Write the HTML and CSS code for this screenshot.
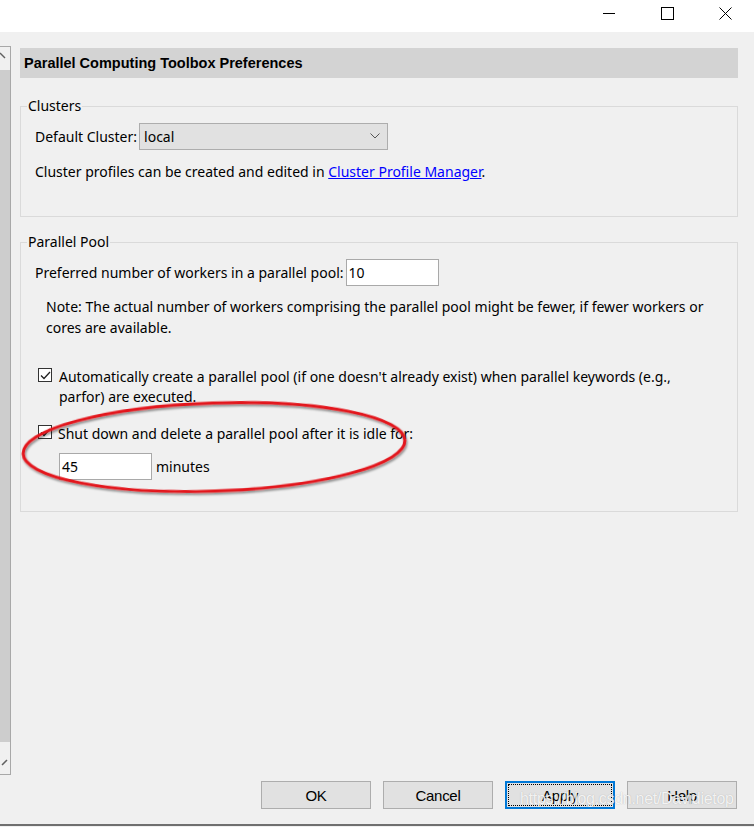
FILE: index.html
```html
<!DOCTYPE html>
<html>
<head>
<meta charset="utf-8">
<link rel="stylesheet" href="styles.css">
</head>
<body>
<div class="window">
  <div class="titlebar">
    <div class="cap-btn"><svg width="12" height="12" viewBox="0 0 12 12"><path d="M0 6.5H12" stroke="#000" stroke-width="1"/></svg></div>
    <div class="cap-btn"><svg width="13" height="13" viewBox="0 0 13 13"><rect x="0.5" y="0.5" width="12" height="12" fill="none" stroke="#000" stroke-width="1"/></svg></div>
    <div class="cap-btn"><svg width="13" height="13" viewBox="0 0 13 13"><path d="M0.5 0.5L12.5 12.5M12.5 0.5L0.5 12.5" stroke="#000" stroke-width="1"/></svg></div>
  </div>
  <div class="main">
    <div class="sidepanel">
      <div class="sp-top"><svg width="10" height="23" viewBox="0 0 10 23"><path d="M0 6L5 11" stroke="#606060" stroke-width="1.5"/></svg></div>
      <div class="sp-thumb"></div>
      <div class="sp-bottom"><svg width="10" height="32" viewBox="0 0 10 32"><path d="M2 23L7 18" stroke="#606060" stroke-width="1.5"/></svg></div>
    </div>
    <div class="content">
      <div class="header">Parallel Computing Toolbox Preferences</div>

      <fieldset class="group group-clusters">
        <legend>Clusters</legend>
        <div class="group-body">
          <div class="row">
            <span class="label">Default Cluster:</span>
            <div class="select"><span>local</span><svg width="10" height="6" viewBox="0 0 10 6"><path d="M0.5 0.5L5 5L9.5 0.5" fill="none" stroke="#555" stroke-width="1"/></svg></div>
          </div>
          <p class="text-line">Cluster profiles can be created and edited in <a class="link">Cluster Profile Manager</a>.</p>
        </div>
      </fieldset>

      <fieldset class="group group-pool">
        <legend>Parallel Pool</legend>
        <div class="group-body">
          <div class="row">
            <span class="label">Preferred number of workers in a parallel pool:</span>
            <div class="input input-workers">10</div>
          </div>
          <p class="note">Note: The actual number of workers comprising the parallel pool might be fewer, if fewer workers or cores are available.</p>
          <div class="check check-auto">
            <span class="box"><svg width="11" height="9" viewBox="0 0 11 9"><path d="M1 4.5L4 7.5L10 1" fill="none" stroke="#222" stroke-width="1.3"/></svg></span>
            <span class="check-text">Automatically create a parallel pool (if one doesn't already exist) when parallel keywords (e.g., parfor) are executed.</span>
          </div>
          <div class="check check-shut">
            <span class="box"><svg width="11" height="9" viewBox="0 0 11 9"><path d="M1 4.5L4 7.5L10 1" fill="none" stroke="#222" stroke-width="1.3"/></svg></span>
            <span class="check-text">Shut down and delete a parallel pool after it is idle for:</span>
          </div>
          <div class="row row-minutes">
            <div class="input input-minutes">45</div>
            <span class="label">minutes</span>
          </div>
        </div>
      </fieldset>

      <div class="buttons">
        <button class="btn">OK</button>
        <button class="btn">Cancel</button>
        <button class="btn btn-focus">Apply</button>
        <button class="btn">Help</button>
      </div>
    </div>
  </div>
  <div class="bottomline"></div>

  <svg class="annotation" width="754" height="827" viewBox="0 0 754 827">
    <defs>
      <filter id="sh" x="-10%" y="-20%" width="120%" height="140%">
        <feDropShadow dx="1" dy="2" stdDeviation="1.2" flood-color="#000" flood-opacity="0.45"/>
      </filter>
    </defs>
    <ellipse cx="214" cy="447" rx="191" ry="44" transform="rotate(-2 214 447)" fill="none" stroke="#e3141b" stroke-width="3" filter="url(#sh)"/>
  </svg>
  <div class="watermark">https://blog.csdn.net/Davidietop</div>
</div>
</body>
</html>
```
FILE: styles.css
```css
* { box-sizing: border-box; }
html, body { margin: 0; padding: 0; }
body {
  width: 754px;
  height: 827px;
  overflow: hidden;
  background: #f0f0f0;
  font-family: "Noto Sans", "Open Sans", sans-serif;
  font-size: 14px;
  color: #000;
}
.window {
  position: relative;
  width: 754px;
  height: 827px;
  display: flex;
  flex-direction: column;
}
.titlebar {
  height: 32px;
  background: #fff;
  display: flex;
  justify-content: flex-end;
  flex: none;
}
.cap-btn {
  width: 58px;
  display: flex;
  align-items: flex-start;
  justify-content: center;
  padding-top: 7px;
}
.main {
  height: 792px;
  display: flex;
  flex: none;
}
.sidepanel {
  width: 11px;
  margin-top: 14px;
  height: 729px;
  border: 1px solid #a8a8a8;
  border-left: 0;
  display: flex;
  flex-direction: column;
  background: #f0f0f0;
}
.sp-top { height: 23px; }
.sp-thumb { flex: 1; background: #cdcdcd; }
.sp-bottom { height: 32px; }
.sp-top svg, .sp-bottom svg { display: block; }
.content {
  flex: 1;
  display: flex;
  flex-direction: column;
  padding: 16px 16px 15px 9px;
}
.header {
  height: 30px;
  line-height: 30px;
  background: #d3d3d3;
  padding-left: 4px;
  font-family: "Liberation Sans", Arial, sans-serif;
  font-weight: bold;
  font-size: 14.5px;
}
.group {
  margin: 0;
  padding: 0 0 0 6px;
  border: 1px solid #dadada;
  min-width: 0;
}
.group legend {
  padding: 0 1px;
  line-height: 18px;
  font-size: 14px;
}
.group-clusters { margin-top: 19px; padding-bottom: 34px; }
.group-pool { margin-top: 16px; padding-bottom: 32px; }
.group-body { padding-left: 8px; }
.row {
  display: flex;
  align-items: center;
  gap: 2px;
  height: 26px;
  margin-top: 8px;
}
.select {
  width: 249px;
  height: 27px;
  background: #e1e1e1;
  border: 1px solid #adadad;
  display: flex;
  align-items: center;
  justify-content: space-between;
  padding: 0 7px 0 4px;
}
.text-line {
  margin: 13px 0 0;
  line-height: 20px;
}
.link {
  color: #0000ff;
  text-decoration: underline;
}
.input {
  height: 27px;
  background: #fff;
  border: 1px solid #a9a9a9;
  display: flex;
  align-items: center;
  padding-left: 2px;
}
.input-workers { width: 93px; }
.note {
  margin: 11px 0 0 11px;
  line-height: 21px;
  padding-right: 10px;
}
.check {
  display: flex;
  align-items: flex-start;
  line-height: 20px;
}
.check-auto { margin-top: 29px; padding-right: 20px; }
.check-shut { margin-top: 17px; }
.box {
  width: 14px;
  height: 14px;
  border: 1px solid #333;
  background: #fff;
  margin: 1px 0 0 3px;
  display: flex;
  align-items: center;
  justify-content: center;
  flex: none;
}
.check-text { margin-left: 7px; }
.check-shut .check-text { margin-left: 6px; }
.row-minutes { margin-top: 9px; padding-left: 24px; gap: 4px; }
.input-minutes { width: 93px; }
.buttons {
  margin-top: auto;
  display: flex;
  justify-content: flex-end;
  gap: 12px;
  padding-right: 1px;
}
.btn {
  width: 110px;
  height: 28px;
  background: #e1e1e1;
  border: 1px solid #adadad;
  font-family: "Liberation Sans", Arial, sans-serif;
  font-size: 15px;
  color: #000;
  padding: 0;
  letter-spacing: -0.3px;
}
.btn-focus {
  border: 2px solid #0078d7;
  outline: 1px dotted #000;
  outline-offset: -4px;
}
.bottomline {
  height: 2px;
  background: #6f6f6f;
  flex: none;
}
.annotation {
  position: absolute;
  left: 0;
  top: 0;
  pointer-events: none;
}
.watermark {
  position: absolute;
  left: 520px;
  top: 790px;
  font-family: "Liberation Sans", Arial, sans-serif;
  font-size: 16px;
  color: rgba(255, 255, 255, 0.85);
  text-shadow: 0 0 1px rgba(120, 120, 120, 0.5);
  letter-spacing: -0.3px;
}
```
